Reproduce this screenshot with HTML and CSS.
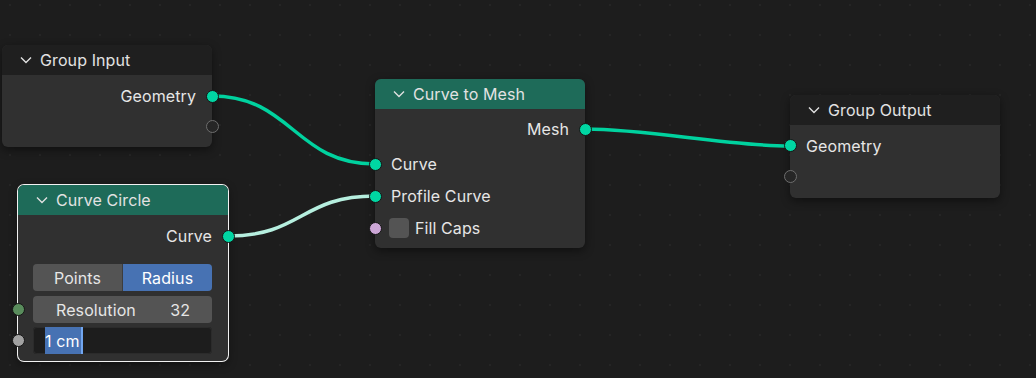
FILE: index.html
```html
<!DOCTYPE html>
<html lang="en">
<head>
    <meta charset="UTF-8">
    <title>Geometry Nodes</title>
    <link rel="stylesheet" href="styles.css">
</head>
<body>
<div class="editor">
    <svg class="links" width="1036" height="378" viewBox="0 0 1036 378">
        <path class="link" d="M212 96 C 292 96, 295 164, 375 164"/>
        <path class="link link-active" d="M228 236 C 302 236, 301 196, 375 196"/>
        <path class="link" d="M585 129 C 650 129, 725 146, 790 146"/>
    </svg>

    <!-- Group Input -->
    <div class="node node-group-input">
        <div class="node-header">
            <svg class="chevron" width="12" height="8" viewBox="0 0 12 8"><path d="M1 1.5 L6 6.5 L11 1.5"/></svg>
            <span>Group Input</span>
        </div>
        <div class="node-body">
            <div class="socket-row out"><span>Geometry</span><i class="socket geometry"></i></div>
            <div class="socket-row out"><i class="socket empty"></i></div>
        </div>
    </div>

    <!-- Curve Circle -->
    <div class="node node-curve-circle selected">
        <div class="node-header geo">
            <svg class="chevron" width="12" height="8" viewBox="0 0 12 8"><path d="M1 1.5 L6 6.5 L11 1.5"/></svg>
            <span>Curve Circle</span>
        </div>
        <div class="node-body">
            <div class="socket-row out tall"><span>Curve</span><i class="socket geometry"></i></div>
            <div class="widget-row toggle">
                <div class="toggle-btn">Points</div>
                <div class="toggle-btn active">Radius</div>
            </div>
            <div class="widget-row number-field">
                <i class="socket integer"></i>
                <span>Resolution</span>
                <span>32</span>
            </div>
            <div class="widget-row text-field">
                <i class="socket float"></i>
                <span class="selection">1 cm</span>
            </div>
        </div>
    </div>

    <!-- Curve to Mesh -->
    <div class="node node-curve-to-mesh">
        <div class="node-header geo">
            <svg class="chevron" width="12" height="8" viewBox="0 0 12 8"><path d="M1 1.5 L6 6.5 L11 1.5"/></svg>
            <span>Curve to Mesh</span>
        </div>
        <div class="node-body">
            <div class="socket-row out tall"><span>Mesh</span><i class="socket geometry"></i></div>
            <div class="inputs">
                <div class="socket-row in tall"><i class="socket geometry"></i><span>Curve</span></div>
                <div class="socket-row in tall"><i class="socket geometry"></i><span>Profile Curve</span></div>
                <div class="socket-row in tall"><i class="socket boolean"></i><span class="checkbox"></span><span>Fill Caps</span></div>
            </div>
        </div>
    </div>

    <!-- Group Output -->
    <div class="node node-group-output">
        <div class="node-header">
            <svg class="chevron" width="12" height="8" viewBox="0 0 12 8"><path d="M1 1.5 L6 6.5 L11 1.5"/></svg>
            <span>Group Output</span>
        </div>
        <div class="node-body">
            <div class="socket-row in mid"><i class="socket geometry"></i><span>Geometry</span></div>
            <div class="socket-row in mid"><i class="socket empty"></i></div>
        </div>
    </div>
</div>
</body>
</html>
```

FILE: styles.css
```css
* {
    margin: 0;
    padding: 0;
    box-sizing: border-box;
}

body {
    background: #1d1d1d;
    font-family: Inter, "Noto Sans", sans-serif;
    font-size: 16px;
    letter-spacing: 0.1px;
    color: #e6e6e6;
    overflow: hidden;
}

.editor {
    position: relative;
    width: 1036px;
    height: 378px;
    background-color: #1d1d1d;
    background-image: radial-gradient(circle, #252525 1px, transparent 1.5px);
    background-size: 30px 30px;
    background-position: -5px -10px;
}

.links {
    position: absolute;
    left: 0;
    top: 0;
}

.link {
    fill: none;
    stroke: #00d29f;
    stroke-width: 3.5;
    stroke-linecap: round;
}

.link-active {
    stroke: #b6efdf;
}

/* nodes */
.node {
    position: absolute;
    width: 210px;
    background: #303030;
    border-radius: 6px;
    box-shadow: 0 3px 10px rgba(0, 0, 0, 0.45);
}

.node.selected {
    box-shadow: 0 0 0 1px #f2f2f2, 0 3px 10px rgba(0, 0, 0, 0.45);
}

.node-group-input { left: 2px; top: 45px; }
.node-curve-circle { left: 18px; top: 185px; }
.node-curve-to-mesh { left: 375px; top: 79px; }
.node-group-output { left: 790px; top: 95px; }

.node-header {
    height: 30px;
    display: flex;
    align-items: center;
    gap: 8px;
    padding-left: 18px;
    background: #1f1f1f;
    border-radius: 6px 6px 0 0;
    color: #e2e2e2;
}

.node-header.geo {
    background: #1e6b59;
}

.chevron path {
    fill: none;
    stroke: #e0e0e0;
    stroke-width: 1.4;
}

.node-body {
    padding: 6px 0;
}

.node-curve-circle .node-body { padding: 5px 0 7px; }
.node-curve-to-mesh .node-body { padding: 4px 0; }
.node-group-output .node-body { padding: 5px 0 6px; }

.inputs {
    margin-top: 3px;
}

/* socket rows */
.socket-row {
    position: relative;
    height: 30px;
    display: flex;
    align-items: center;
    padding: 0 16px;
}

.socket-row.tall { height: 32px; }
.socket-row.mid { height: 31px; }

.socket-row.out {
    justify-content: flex-end;
}

.socket {
    position: absolute;
    top: 50%;
    width: 13px;
    height: 13px;
    margin-top: -6.5px;
    border-radius: 50%;
    border: 1px solid #151515;
}

.out .socket { right: -6.5px; }
.in .socket { left: -6.5px; }

.socket.geometry { background: #00d6a3; }
.socket.boolean { background: #cca6d6; }
.socket.integer { background: #598c5c; }
.socket.float { background: #a1a1a1; }

.socket.empty {
    background: #262626;
    border: 1.5px solid #6e6e6e;
}

.checkbox {
    width: 20px;
    height: 20px;
    margin: 0 6px 0 -2px;
    background: #545454;
    border-radius: 4px;
}

/* widgets */
.widget-row {
    position: relative;
    display: flex;
    align-items: center;
    height: 27px;
    margin: 0 16px 5px 15px;
    border-radius: 4px;
}

.widget-row .socket { left: -21.5px; }

.toggle {
    margin-top: 12px;
    background: #3d3d3d;
    gap: 1px;
}

.toggle-btn {
    flex: 1;
    height: 100%;
    display: flex;
    align-items: center;
    justify-content: center;
    background: #545454;
}

.toggle-btn:first-child { border-radius: 4px 0 0 4px; }
.toggle-btn:last-child { border-radius: 0 4px 4px 0; }

.toggle-btn.active {
    background: #4772b3;
    color: #ffffff;
}

.number-field {
    justify-content: space-between;
    padding: 0 22px 0 23px;
    background: #545454;
}

.text-field {
    margin-bottom: 0;
    margin-top: -1px;
    padding-left: 12px;
    background: #1d1d1d;
    box-shadow: inset 0 0 0 1px #2b2b2b;
    height: 27px;
}

.selection {
    height: 100%;
    display: flex;
    align-items: center;
    padding-right: 1px;
    background: #4772b3;
    border-right: 2px solid #71a6f0;
    color: #ffffff;
}
```
